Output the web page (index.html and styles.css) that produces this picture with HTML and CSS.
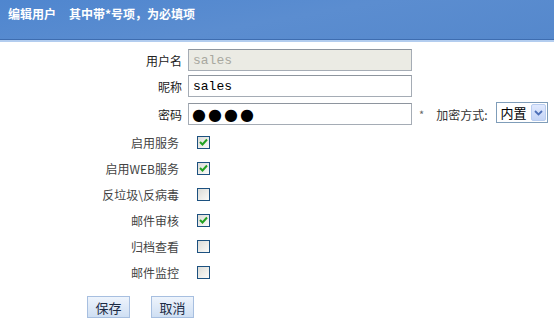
FILE: index.html
```html
<!DOCTYPE html>
<html lang="zh-CN">
<head>
    <meta charset="UTF-8">
    <title>编辑用户</title>
    <link rel="stylesheet" href="styles.css">
</head>
<body>

    <!-- Header bar -->
    <div class="header">
        <span class="title">编辑用户</span>
        <span class="title">其中带*号项，为必填项</span>
    </div>

    <!-- Edit form -->
    <div class="form">
        <div class="label">用户名</div>
        <div class="field"><input class="text" type="text" value="sales" disabled></div>

        <div class="label">昵称</div>
        <div class="field"><input class="text" type="text" value="sales"></div>

        <div class="label">密码</div>
        <div class="field">
            <input class="text pwd" type="text" value="●●●●">
            <span class="star">*</span>
            <span class="enc-label">加密方式:</span>
            <div class="select">
                <span class="select-val">内置</span>
                <span class="select-btn">
                    <svg width="9" height="6" viewBox="0 0 9 6"><path d="M1 1 L4.5 4.5 L8 1" fill="none" stroke="#4d6fb8" stroke-width="1.8"/></svg>
                </span>
            </div>
        </div>

        <div class="label alt">启用服务</div>
        <div class="field"><span class="check"><svg width="9" height="8" viewBox="0 0 9 8"><path d="M1 4 L3.5 6.5 L8 1.5" fill="none" stroke="#21a121" stroke-width="2"/></svg></span></div>

        <div class="label alt">启用WEB服务</div>
        <div class="field"><span class="check"><svg width="9" height="8" viewBox="0 0 9 8"><path d="M1 4 L3.5 6.5 L8 1.5" fill="none" stroke="#21a121" stroke-width="2"/></svg></span></div>

        <div class="label alt">反垃圾\反病毒</div>
        <div class="field"><span class="check"></span></div>

        <div class="label alt">邮件审核</div>
        <div class="field"><span class="check"><svg width="9" height="8" viewBox="0 0 9 8"><path d="M1 4 L3.5 6.5 L8 1.5" fill="none" stroke="#21a121" stroke-width="2"/></svg></span></div>

        <div class="label alt">归档查看</div>
        <div class="field"><span class="check"></span></div>

        <div class="label alt">邮件监控</div>
        <div class="field"><span class="check"></span></div>
    </div>

    <!-- Buttons -->
    <div class="buttons">
        <button class="btn">保存</button>
        <button class="btn">取消</button>
    </div>

</body>
</html>
```

FILE: styles.css
```css
/* General Reset */
body, html {
    margin: 0;
    padding: 0;
    font-family: "Noto Sans CJK SC", "Liberation Sans", sans-serif;
    font-size: 12px;
    color: #333;
    background: #fff;
}

/* Header */
.header {
    height: 40px;
    background: linear-gradient(170deg, #4f86cf 0%, #5b8dd0 50%, #5588cc 100%);
    border-bottom: 1px solid #3e6db0;
    box-shadow: 0 2px 0 #b3cdef;
    padding: 5px 0 0 8px;
    box-sizing: border-box;
    display: flex;
    gap: 13px;
}

.title {
    color: #fff;
    font-weight: bold;
    font-size: 12px;
}

/* Form grid */
.form {
    display: grid;
    grid-template-columns: 183px auto;
    grid-template-rows: 26px 26px 30px;
    grid-auto-rows: 26px;
    margin-top: 7px;
}

.label {
    display: flex;
    align-items: center;
    justify-content: flex-end;
    padding-right: 1px;
    color: #222;
}

.label.alt {
    color: #444;
    padding-right: 4px;
}

.field {
    display: flex;
    align-items: center;
    padding-left: 5px;
}

.text {
    width: 224px;
    height: 22px;
    box-sizing: border-box;
    border: 1px solid #a5acb5;
    border-top-color: #8e959e;
    padding: 0 4px;
    font-family: "Liberation Mono", monospace;
    font-size: 13px;
    color: #000;
    background: #fff;
}

.text:disabled {
    background: #ebebe4;
    color: #a8a8a0;
}

.pwd {
    font-family: "DejaVu Sans", sans-serif;
    font-size: 16px;
    letter-spacing: 2px;
    padding-left: 3px;
}

.star {
    color: #666;
    margin-left: 7px;
    font-size: 11px;
}

.enc-label {
    margin-left: 12px;
    color: #333;
}

/* Select box */
.select {
    display: flex;
    align-items: center;
    margin-left: 9px;
    margin-top: -3px;
    width: 52px;
    height: 21px;
    box-sizing: border-box;
    border: 1px solid #7f9db9;
    background: #fff;
}

.select-val {
    flex: 1;
    padding-left: 3px;
    font-size: 13px;
    color: #000;
}

.select-btn {
    width: 15px;
    height: 17px;
    margin-right: 1px;
    box-sizing: border-box;
    border: 1px solid #b9cdf0;
    border-radius: 2px;
    background: linear-gradient(#e1eafe, #c4d4f6);
    display: flex;
    align-items: center;
    justify-content: center;
}

/* Checkboxes */
.check {
    width: 13px;
    height: 13px;
    margin-left: 9px;
    box-sizing: border-box;
    border: 1px solid #1c5180;
    background: linear-gradient(135deg, #dcdcd7, #fbfbf8);
    display: flex;
    align-items: center;
    justify-content: center;
}

/* Buttons */
.buttons {
    display: flex;
    gap: 21px;
    padding: 11px 0 0 87px;
}

.btn {
    width: 43px;
    height: 22px;
    padding: 0;
    border: 1px solid #a7bfe0;
    background: linear-gradient(#eef4fc, #cfdff3);
    font-family: "Noto Sans CJK SC", sans-serif;
    font-size: 13px;
    color: #1b2a44;
    cursor: pointer;
}
```
